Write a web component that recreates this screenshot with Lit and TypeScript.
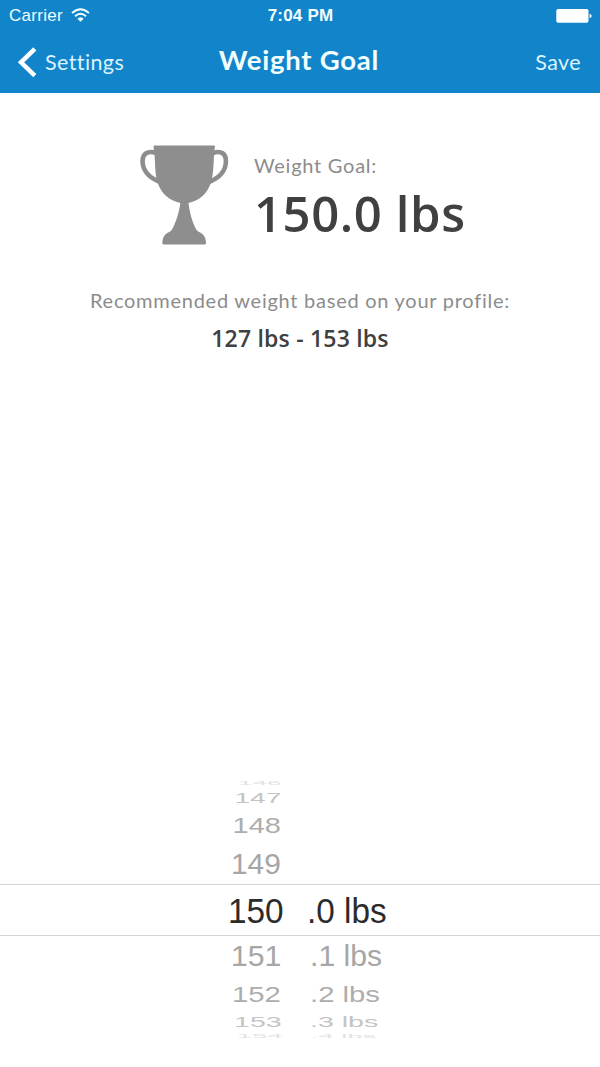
import { LitElement, html, css, svg } from "lit";
import { customElement } from "lit/decorators.js";
import { styleMap } from "lit/directives/style-map.js";

interface PickerRow {
  whole: string;
  part: string;
  height: number;
  size: number;
  sx: number;
  sy: number;
  left: number;
  partLeft: number;
  color: string;
  shift?: number;
}

const above: PickerRow[] = [
  { whole: "146", part: "", height: 7, size: 26, sx: 1, sy: 0.17, left: 238, partLeft: 312, color: "#e2e2e2" },
  { whole: "147", part: "", height: 21, size: 28, sx: 1, sy: 0.53, left: 234.5, partLeft: 312, color: "#c4c4c4" },
  { whole: "148", part: "", height: 35, size: 29, sx: 1, sy: 0.77, left: 232.5, partLeft: 311, color: "#adadad" },
  { whole: "149", part: "", height: 41, size: 30.5, sx: 0.98, sy: 0.96, left: 231, partLeft: 310, color: "#a6a6a6", shift: 0.5 },
];

const current: PickerRow = {
  whole: "150", part: ".0 lbs", height: 50, size: 34, sx: 0.98, sy: 1.02, left: 228, partLeft: 306.5, color: "#2b2b2b", shift: 0.5,
};

const below: PickerRow[] = [
  { whole: "151", part: ".1 lbs", height: 40, size: 30.5, sx: 0.99, sy: 0.96, left: 231, partLeft: 310, color: "#a6a6a6", shift: -0.5 },
  { whole: "152", part: ".2 lbs", height: 38, size: 29, sx: 1.01, sy: 0.77, left: 232, partLeft: 310, color: "#adadad", shift: -0.5 },
  { whole: "153", part: ".3 lbs", height: 17, size: 28, sx: 1.02, sy: 0.53, left: 234, partLeft: 310, color: "#c4c4c4", shift: -0.5 },
  { whole: "154", part: ".4 lbs", height: 11, size: 26, sx: 1.05, sy: 0.17, left: 237, partLeft: 311, color: "#e2e2e2" },
];

const wifi = svg`<svg class="wifi" width="19" height="14" viewBox="0 0 19 14" fill="none" stroke="#f2ffff" stroke-width="1.9">
  <path d="M1 5.1Q9.500 -2.600 18 5.100"/><path d="M4 8.300Q9.500 3.400 15 8.300"/>
  <path d="M6.300 10.700Q9.500 7.700 12.700 10.700L9.500 13.700Z" fill="#f2ffff" stroke="none"/></svg>`;

const battery = svg`<svg width="36" height="15" viewBox="0 0 36 15" fill="#fff">
  <rect x="0.3" y="0.1" width="32.2" height="13.6" rx="1.8"/><path d="M33.6 4.7Q35.6 5.2 35.6 6.9T33.6 9.1Z"/></svg>`;

const chevron = svg`<svg width="20" height="32" viewBox="0 0 20 32" fill="none" stroke="#fff" stroke-width="4.4">
  <path d="M17.8 1.9L4 15.300L17.800 28.700"/></svg>`;

const trophy = svg`<svg class="trophy" width="90" height="102" viewBox="0 0 90 102">
  <g fill="none" stroke="#8d8d8d" stroke-width="4.6">
    <path d="M16 8C8 5.2 2.200 8.500 2.600 17C3.100 27 10 33 20 37"/>
    <path d="M73 8C81 5.2 86.300 8.500 85.900 17C85.400 27 79 33 69 37"/>
  </g>
  <path fill="#8e8e8e" d="M13.500 1.5Q13.500 .5 14.500 .5H74Q75 .5 75 1.500L74.500 4C73.500 13 74 26 71.500 36C67.500 49 60 55 48.500 58C49.500 66 52 77 56 84C57.500 87 60.500 87 63 89.500Q65.500 92 66 97V98Q66 99.500 64.500 99.500H24Q22.300 99.500 22.300 98V97Q22.800 92 25.300 89.500C27.800 87 30.800 87 32.300 84C36.300 77 39.300 66 40.300 58C29 55 21 49 17 36C14.500 26 15.500 13 13.800 4Z"/></svg>`;

@customElement("app-root")
export class AppRoot extends LitElement {
  static styles = css`
    :host { display: flex; flex-direction: column; height: 1067px; overflow: hidden; background: #fff; font-family: Lato, sans-serif; }
    svg { display: block; flex: none; }
    span, div { white-space: nowrap; }
    header { height: 93px; background: #1184ca; color: #f2ffff; flex: none; }
    .status, .nav { display: grid; grid-template-columns: 1fr auto 1fr; }
    .status { height: 31px; line-height: 32px; padding: 0 8px 0 9px; align-items: center; font-family: "Liberation Sans", sans-serif; font-size: 17px; }
    .carrier { display: flex; align-items: center; gap: 8px; letter-spacing: 0.3px; }
    .wifi { margin-top: -3px; }
    .clock { font-weight: 700; font-size: 17px; letter-spacing: 0.2px; }
    .battery { justify-self: end; }
    .nav { height: 62px; padding: 0 19px 0 17px; line-height: 63px; font-size: 21.5px; font-weight: 400; }
    .back { display: flex; align-items: center; gap: 8px; letter-spacing: 0.4px; }
    .back, .save { color: #daf3ff; }
    .title { font-size: 27.5px; font-weight: 700; letter-spacing: 0.75px; line-height: 58px; }
    .save { justify-self: end; letter-spacing: 0.4px; }
    .goal { display: flex; padding: 52px 0 0 140px; height: 137px; gap: 24px; box-sizing: content-box; }
    .words { display: flex; flex-direction: column; padding-top: 6px; }
    .label { color: #8c8c8c; font-weight: 400; font-size: 20px; line-height: 28px; letter-spacing: 0.74px; }
    .amount { color: #404040; font: 600 49px/69px "Open Sans", sans-serif; letter-spacing: 0.6px; }
    .hint { display: flex; flex-direction: column; align-items: center; }
    .hint .label { line-height: 36px; }
    .range { color: #404040; font: 600 23px/41px "Open Sans", sans-serif; letter-spacing: 0.2px; }
    .picker { margin-top: auto; padding-bottom: 25px; font-family: "Liberation Sans", sans-serif; }
    .row { display: grid; grid-template-columns: auto 1fr; }
    .cell { transform-origin: 0 50%; width: 0; }
    .selected { border: solid #d4d4d4; border-width: 1px 0; }
  `;

  private row(r: PickerRow) {
    const transform = `translateY(${r.shift ?? 0}px) scale(${r.sx}, ${r.sy})`;
    const row = { height: `${r.height}px`, lineHeight: `${r.height}px`, fontSize: `${r.size}px`, color: r.color,
      paddingLeft: `${r.left}px`, columnGap: `${r.partLeft - r.left}px` };
    return html`<div class="row" style=${styleMap(row)}>
      <span class="cell" style=${styleMap({ transform })}>${r.whole}</span>
      <span class="cell" style=${styleMap({ transform })}>${r.part}</span>
    </div>`;
  }

  render() {
    return html`
      <header>
        <div class="status">
          <div class="carrier"><span>Carrier</span>${wifi}</div>
          <span class="clock">7:04 PM</span>
          <div class="battery">${battery}</div>
        </div>
        <div class="nav">
          <div class="back">${chevron}<span>Settings</span></div>
          <span class="title">Weight Goal</span>
          <span class="save">Save</span>
        </div>
      </header>
      <section class="goal">
        ${trophy}
        <div class="words"><span class="label">Weight Goal:</span><span class="amount">150.0 lbs</span></div>
      </section>
      <section class="hint">
        <span class="label">Recommended weight based on your profile:</span>
        <span class="range">127 lbs - 153 lbs</span>
      </section>
      <section class="picker">
        ${above.map((r) => this.row(r))}
        <div class="selected">${this.row(current)}</div>
        ${below.map((r) => this.row(r))}
      </section>`;
  }
}
